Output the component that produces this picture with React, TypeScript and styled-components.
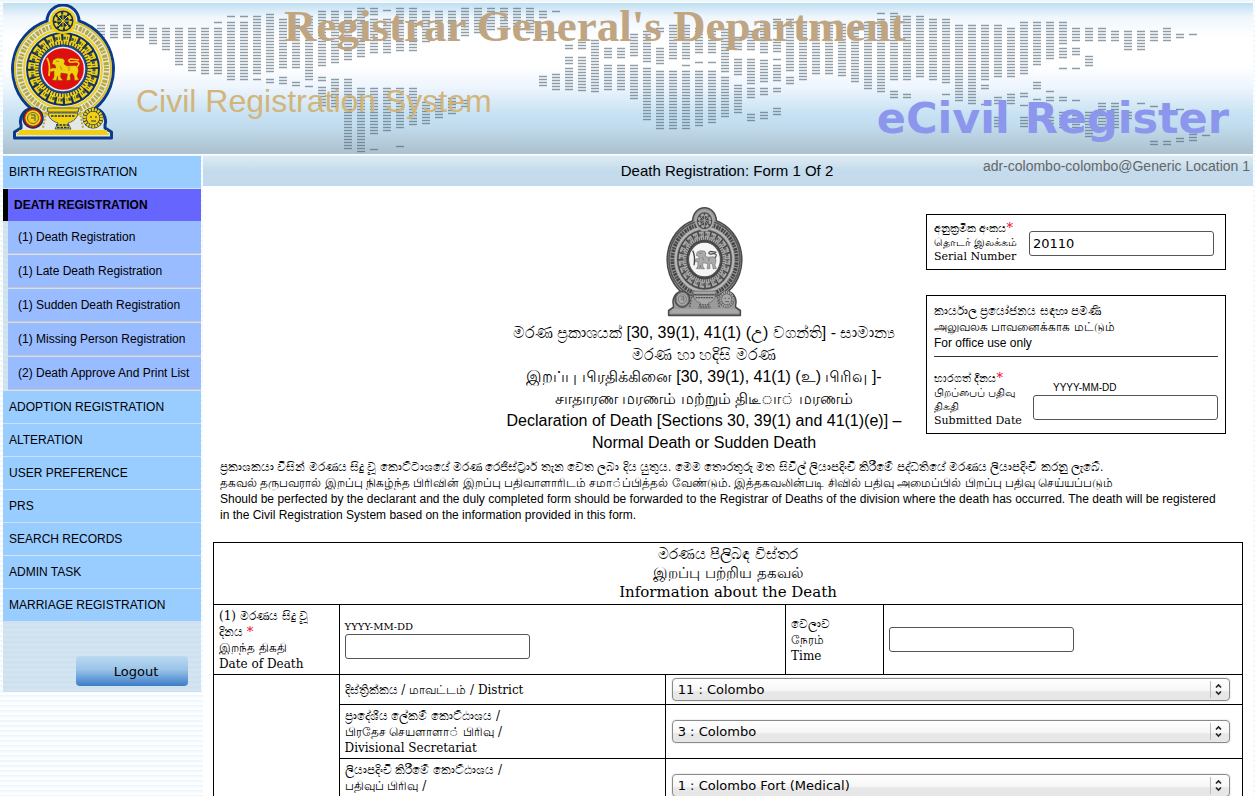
import React from 'react';
import styled, { createGlobalStyle, css } from 'styled-components';

const sans = "'Liberation Sans', 'Noto Sans', sans-serif";
const serif = "'DejaVu Serif', 'Noto Sans', serif";
const ui = "'DejaVu Sans', 'Noto Sans', sans-serif";

const Global = createGlobalStyle`
  * { box-sizing: border-box; }
  body {
    margin: 0;
    font-family: ${sans};
    font-size: 12px;
    color: #000;
    background: repeating-linear-gradient(#e9f4fa 0, #f5fafd 2px, #fdfeff 3px, #fdfeff 5px);
  }
`;

const Page = styled.div`
  padding: 3px 2px 0 3px;
  height: 100vh;
  overflow: hidden auto;
  scrollbar-width: none;
`;

/* ---------- banner ---------- */

const Banner = styled.header`
  position: relative;
  height: 151px;
  background: linear-gradient(#bfdff1, #eff6fc 14px, #fff 34px, #fff 62px, #eef5fd 84px, #c6e1f3 112px, #c2ddee 122px, #adc1cf 150px);
`;

const Dots = styled.svg`
  position: absolute;
  top: 0;
  left: 0;
`;

const BannerBody = styled.div`
  position: relative;
  display: grid;
  grid-template-columns: 104px 1fr auto;
  grid-template-rows: 64px 76px;
  column-gap: 21px;
  padding: 0 24px 0 8px;
`;

const CrestCell = styled.div`
  grid-row: 1 / 3;
  padding-top: 1px;
`;

const Department = styled.h1`
  grid-column: 2 / 4;
  margin: 0;
  padding-left: 148px;
  font: bold 45px/46px 'Liberation Serif', serif;
  color: #c0a582;
  white-space: nowrap;
`;

const System = styled.p`
  margin: 0;
  padding-top: 14px;
  font: 32px/40px ${sans};
  color: #d2b57a;
  white-space: nowrap;
`;

const Product = styled.p`
  margin: 0;
  padding-top: 28px;
  font: bold 43px/46px ${ui};
  color: #8b96ec;
  white-space: nowrap;
`;

/* ---------- frame ---------- */

const Columns = styled.div`
  display: grid;
  grid-template-columns: 198px 1fr;
  gap: 2px;
  margin-top: 2px;
`;

const Sidebar = styled.aside`
  align-self: start;
  min-height: 536px;
  background: repeating-linear-gradient(#cde1ef 0 2px, #d4e4f1 3px 5px);
`;

const Menu = styled.ul`
  margin: 0;
  padding: 0;
  list-style: none;
`;

const MenuLink = styled.a<{ $active?: boolean }>`
  display: block;
  height: 32px;
  margin-bottom: 1px;
  padding-left: 6px;
  line-height: 32px;
  color: #000;
  text-decoration: none;
  background: #99ccff;
  ${(p) =>
    p.$active &&
    css`
      margin-bottom: 0;
      border-left: 5px solid #000;
      background: #6666ff;
      font-weight: bold;
    `}
`;

const SubMenu = styled.ul`
  margin: 0 0 0 5px;
  padding: 0;
  list-style: none;
`;

const SubLink = styled.a`
  display: block;
  height: 33px;
  margin-bottom: 1px;
  padding-left: 10px;
  border-bottom: 1px solid #cfc4c8;
  line-height: 33px;
  color: #000;
  text-decoration: none;
  background: #99bbff;
  white-space: nowrap;
`;

const LogoutRow = styled.div`
  display: flex;
  justify-content: flex-end;
  padding: 34px 13px 0;
`;

const Logout = styled.button`
  width: 112px;
  height: 30px;
  padding: 0 0 0 8px;
  border: 0;
  border-radius: 4px;
  font: 13px ${ui};
  color: #000;
  background: linear-gradient(#bbdaf0, #9ac4e8 45%, #3c7dc8);
`;

const Main = styled.main`
  min-width: 0;
  background: #fff;
`;

const TitleBar = styled.div`
  display: grid;
  grid-template-columns: 1fr auto 1fr;
  height: 30px;
  padding: 0 3px 0 1px;
  background: linear-gradient(#deebf3, #c3dbed 50%, #c3dbed);
`;

const FormTitle = styled.h2`
  grid-column: 2;
  margin: 0;
  font: 15px/30px ${sans};
`;

const UserInfo = styled.span`
  justify-self: end;
  font: 14px/21px ${sans};
  color: #666;
`;

/* ---------- form head ---------- */

const FormHead = styled.div`
  display: grid;
  grid-template-columns: 1fr 400px 300px;
  gap: 22px;
  padding: 21px 27px 0 10px;
`;

const Declaration = styled.div`
  grid-column: 2;
  text-align: center;
  font: 16px/22px ${sans};
  white-space: nowrap;
`;

const CrestBox = styled.div`
  height: 115px;
`;

const Side = styled.div`
  display: flex;
  flex-direction: column;
  gap: 25px;
  padding-top: 7px;
`;

const SideBox = styled.section`
  border: 1px solid #000;
  padding: 7px 7px 5px;
`;

const FieldRow = styled.div<{ $low?: boolean }>`
  display: grid;
  grid-template-columns: 1fr 185px;
  align-items: center;
  padding-top: ${(p) => (p.$low ? 15 : 0)}px;
  padding-right: ${(p) => (p.$low ? 0 : 4)}px;
`;

const SmallLabel = styled.label`
  font: 11px/14px ${serif};
  white-space: nowrap;
`;

const Star = styled.span`
  color: #f00020;
  font-size: 13px;
  line-height: 1px;
`;

const Office = styled.p`
  margin: 0;
  padding-bottom: 5px;
  border-bottom: 1px solid #333;
  line-height: 16px;
`;

const DateField = styled.div`
  display: flex;
  flex-direction: column;
`;

const Hint = styled.span<{ $serif?: boolean; $pad?: boolean }>`
  padding-left: ${(p) => (p.$pad ? 20 : 0)}px;
  font: 10px/14px ${(p) => (p.$serif ? serif : sans)};
`;

const TextBox = styled.input`
  width: 185px;
  height: 25px;
  padding: 0 3px;
  border: 1px solid #555;
  border-radius: 3px;
  font: 13px ${ui};
  color: #000;
  background: #fff;
`;

const Notes = styled.div`
  padding: 5px 28px 0 17px;
  line-height: 16px;
  p { margin: 0; }
`;

/* ---------- details table ---------- */

const TableWrap = styled.div`
  padding: 19px 10px 0;
`;

const Details = styled.table`
  width: 100%;
  border-collapse: collapse;
  table-layout: fixed;
  font: 12px/16px ${serif};
  th, td {
    border: 1px solid #000;
    padding: 2px 5px;
    font-weight: normal;
    text-align: left;
  }
`;

const Heading = styled.th`
  && {
    height: 62px;
    font-size: 15px;
    line-height: 19px;
    text-align: center;
  }
`;

const Row = styled.tr<{ $h: number }>`
  height: ${(p) => p.$h}px;
`;

const SelectWrap = styled.div`
  position: relative;
  margin: 0 7px 0 1px;
  svg {
    position: absolute;
    right: 0;
    top: 0;
    pointer-events: none;
  }
`;

const Select = styled.select`
  display: block;
  width: 100%;
  height: 23px;
  padding: 0 5px;
  border: 1px solid #8a8a8a;
  border-radius: 4px;
  appearance: none;
  font: 13px ${ui};
  color: #000;
  background: linear-gradient(#fff, #f6f6f6 55%, #e8e8e8 60%, #e6e6e6);
  box-shadow: 0 0 2px #ccc;
`;

/* Each entry is a column centre followed by top/bottom pairs of its dash runs. */
const MAP: [number, number[]][] = [
  [101, [26, 38]], [114, [26, 38]], [127, [26, 38]], [140, [26, 38]], [153, [29, 44]], [166, [29, 50]],
  [179, [29, 66]], [192, [29, 72]], [205, [29, 75]], [218, [23, 23, 29, 75]], [231, [17, 17, 23, 81]],
  [244, [17, 17, 23, 81]], [257, [17, 74, 80, 80]], [270, [15, 72, 80, 84]], [283, [20, 69, 78, 84]],
  [296, [20, 70, 83, 88]], [309, [17, 80, 87, 87]], [322, [12, 66, 78, 81, 88, 106]], [335, [12, 63, 80, 107]],
  [348, [12, 61, 80, 149]], [361, [9, 58, 89, 152]], [374, [9, 15, 20, 54, 89, 135, 150, 150]],
  [387, [11, 11, 20, 54, 89, 132]], [400, [9, 52, 89, 130, 147, 147]], [413, [9, 52, 89, 127]],
  [426, [12, 43, 103, 124]], [439, [12, 41, 100, 118]], [452, [12, 40, 99, 115]], [465, [9, 37, 101, 107]],
  [478, [9, 33]], [491, [9, 30]], [504, [9, 30]], [517, [9, 30]], [530, [9, 33]],
  [543, [12, 20, 32, 35, 77, 87]], [556, [12, 12, 33, 33, 75, 90]], [569, [46, 50, 58, 64, 69, 92]],
  [582, [43, 50, 58, 92]], [595, [41, 92]], [608, [49, 58, 66, 92]], [621, [49, 58, 66, 92]],
  [634, [35, 58, 66, 101]], [647, [32, 64, 69, 122]], [660, [29, 34, 49, 64, 72, 130]],
  [673, [26, 61, 72, 130]], [686, [26, 61, 66, 66, 72, 130]], [699, [29, 55, 63, 63, 72, 127]],
  [712, [32, 55, 63, 63, 72, 125]], [725, [30, 73, 78, 119]], [738, [38, 52, 60, 75, 86, 113]],
  [751, [32, 52, 60, 84, 89, 98, 115, 121]], [764, [23, 55, 61, 84, 89, 95, 113, 121]],
  [777, [20, 29, 40, 52, 60, 60, 66, 82, 89, 93, 109, 116]], [790, [20, 73, 78, 84]], [803, [23, 80]],
  [816, [26, 75]], [829, [23, 75]], [842, [25, 78]], [855, [28, 83]], [868, [23, 89]], [881, [14, 14, 20, 92]],
  [894, [14, 80, 92, 98]], [907, [17, 81, 95, 98]], [920, [17, 78]], [933, [20, 81]],
  [946, [20, 84, 95, 95]], [959, [26, 101]], [972, [26, 104]], [985, [26, 81, 86, 89, 105, 105]],
  [998, [26, 78, 98, 104, 118, 127]], [1011, [29, 78, 95, 105]], [1024, [23, 75, 94, 97, 106, 106, 118, 127]],
  [1037, [23, 67, 83, 90, 100, 100]], [1050, [23, 61, 92, 92, 98, 101, 118, 124]],
  [1063, [23, 44, 49, 58, 69, 69, 98, 101, 113, 128]], [1076, [29, 41, 49, 55, 69, 69, 101, 101, 113, 128]],
  [1089, [29, 41, 57, 66, 113, 138]], [1102, [29, 41, 104, 130]], [1115, [32, 41, 104, 130]],
  [1128, [32, 50, 113, 119]], [1141, [32, 50, 104, 104]], [1154, [32, 41, 107, 107, 142, 145]],
  [1167, [29, 41, 142, 145]], [1180, [35, 38, 110, 110, 139, 142]], [1193, [35, 35, 135, 141]], [1206, [136, 138]],
];

const dashPath = MAP.map(([x, spans]) => {
  let d = '';
  for (let i = 0; i < spans.length; i += 2) {
    for (let y = spans[i]; y <= spans[i + 1]; y += 3) d += `M${x - 4} ${y - 0.5}h8`;
  }
  return d;
}).join('');

function WorldDots() {
  return (
    <Dots width="1250" height="151" viewBox="3 3 1250 151" aria-hidden="true">
      <path d={dashPath} stroke="#7c98a8" strokeOpacity="0.22" strokeWidth="3" />
      <path d={dashPath} stroke="#46525c" strokeOpacity="0.5" strokeWidth="1" />
    </Dots>
  );
}

const OUTLINE =
  'M36 17 A16 16 0 0 1 68 17 A51 51 0 0 1 84 104.500 A13 13 0 0 1 94 121 L94 124 L100.500 128 L100.500 134 L3.500 134 L3.500 128 L10 124 L10 121 A13 13 0 0 1 20 104.500 A51 51 0 0 1 36 17Z';

const LION =
  'M-10 -9 L-6 -11 L0 -10.500 L2 -8 L1 -5 L4 -3 L12 -3.500 C15 -3 16 0 15 4 L14 7 L16 11 L11.500 11.500 L11 7 L9 4 L7 6 L7.500 11 L3.500 11.500 L4.500 5 L-2 4 L-2.500 8 L0 11.500 L-5 11.500 L-5.500 7 L-6.500 11.500 L-11 11 L-9 8 L-9 2 L-12 3 L-14 1 L-11 -1 L-7 -1 L-8 -4 L-11 -5 Z';

function Crest({ mono, width, height }: { mono?: boolean; width: number; height: number }) {
  const line = mono ? '#4a4a4a' : '#0b3a8c';
  const gold = mono ? '#a8a8a8' : '#f0d010';
  const pale = mono ? '#9a9a9a' : '#e3e8e6';
  const red = mono ? '#f4f4f4' : '#e00f0f';
  const dark = mono ? '#4a4a4a' : '#14305c';
  return (
    <svg width={width} height={height} viewBox="0 0 104 136" role="img" aria-label="Emblem of Sri Lanka" preserveAspectRatio="none">
      <path d={OUTLINE} fill={pale} stroke={line} strokeWidth={mono ? 2 : 3} strokeLinejoin="round" />
      <circle cx="52" cy="65" r="48" fill="none" stroke={mono ? '#555' : '#d9c030'} strokeWidth="2" />
      <circle cx="52" cy="65" r="43.500" fill="none" stroke={mono ? '#444' : '#b9a93c'} strokeWidth="5" strokeDasharray="2 1.5 3 1" />
      <circle cx="52" cy="65" r="39" fill="none" stroke={mono ? '#bbb' : gold} strokeWidth="2" />
      <circle cx="52" cy="65" r="37" fill={dark} />
      <circle cx="52" cy="65" r="31.500" fill="none" stroke={gold} strokeWidth="7" strokeDasharray="6.200 2.050" />
      <circle cx="52" cy="65" r="31" fill="none" stroke={dark} strokeWidth="3" strokeDasharray="2.500 1.200 0.800 3.620" strokeOpacity="0.8" />
      <circle cx="52" cy="65" r="26.500" fill="none" stroke={gold} strokeWidth="4" strokeDasharray="2 0.900" />
      <circle cx="52" cy="65" r="24" fill={mono ? '#444' : '#1c4a94'} />
      <circle cx="52" cy="65" r="21.500" fill={red} stroke={mono ? '#555' : '#e6edf5'} strokeWidth="1.500" />
      <g transform="translate(52 65)" fill={mono ? '#aaa' : gold} stroke={mono ? '#333' : '#7a4a00'} strokeWidth="0.5">
        <path d={LION} />
        <path d="M14 -2 C18 -6 15 -8 10 -7 C6 -6 4 -9 8 -10 L16 -9" fill="none" stroke={mono ? '#444' : gold} strokeWidth="1.500" />
        <path d="M-16 -11 C-13 -6 -13 0 -14 7" fill="none" stroke={mono ? '#444' : gold} strokeWidth="1.800" />
        <path d="M-7 -8 L-4 -7.500 M-3 -3 L-1 1 M6 -2 L6 2" fill="none" />
      </g>
      <circle cx="52" cy="17" r="13" fill={gold} />
      <circle cx="52" cy="17" r="10.500" fill={dark} />
      <g stroke={gold} fill="none">
        <circle cx="52" cy="17" r="7.500" strokeWidth="3" strokeDasharray="3.900 1.990" />
        <path d="M52 10V24M45 17H59M47 12L57 22M57 12L47 22" strokeWidth="1" />
      </g>
      <path d="M36 104H68L67 108H37ZM37 109H67C66 116 60 118 57 119L60 125H44L47 119C44 118 38 116 37 109Z" fill={gold} stroke={dark} strokeWidth="0.700" />
      <path d="M40 112H64M45 121H59M46 123.500H58" stroke={dark} strokeWidth="1.400" strokeDasharray="2.500 1" />
      <path d="M35 108L32 124M69 108L72 124" stroke={mono ? '#555' : '#b9a93c'} strokeWidth="2" strokeDasharray="2 1.500" />
      <circle cx="22" cy="114" r="9.500" fill={gold} stroke={dark} strokeWidth="2.500" />
      <circle cx="22" cy="114" r="8.500" fill="none" stroke={mono ? '#777' : '#c01818'} strokeWidth="1.500" />
      <circle cx="22" cy="114" r="5.500" fill="none" stroke={dark} strokeWidth="0.600" />
      <path d="M20 111h4v6M20 114h3" fill="none" stroke={dark} strokeWidth="0.800" />
      <circle cx="82" cy="114" r="10.500" fill={dark} />
      <circle cx="82" cy="114" r="8.500" fill="none" stroke={gold} strokeWidth="3" strokeDasharray="2.200 0.760" />
      <circle cx="82" cy="114" r="6.500" fill={gold} />
      <path d="M79 113h2M84 113h2M80 117h5" stroke={dark} strokeWidth="1" />
      <path d="M8 126H96V129H98V131H6V129H8Z" fill={gold} />
    </svg>
  );
}

const subItems = [
  '(1) Death Registration',
  '(1) Late Death Registration',
  '(1) Sudden Death Registration',
  '(1) Missing Person Registration',
  '(2) Death Approve And Print List',
];

const items = [
  'ADOPTION REGISTRATION',
  'ALTERATION',
  'USER PREFERENCE',
  'PRS',
  'SEARCH RECORDS',
  'ADMIN TASK',
  'MARRIAGE REGISTRATION',
];

function DropDown({ id, value }: { id: string; value: string }) {
  return (
    <SelectWrap>
      <Select id={id} defaultValue={value}>
        <option>{value}</option>
      </Select>
      <svg width="20" height="23" viewBox="0 0 20 23" aria-hidden="true">
        <path d="M.5 3V20" stroke="#bbb" />
        <path d="M6 9.500L8.500 7L11 9.500M6 13.500L8.500 16L11 13.500" fill="none" stroke="#222" strokeWidth="1.600" />
      </svg>
    </SelectWrap>
  );
}

export default function App() {
  return (
    <Page>
      <Global />
      <Banner>
        <WorldDots />
        <BannerBody>
          <CrestCell>
            <Crest width={104} height={136} />
          </CrestCell>
          <Department>Registrar General's Department</Department>
          <System>Civil Registration System</System>
          <Product>eCivil Register</Product>
        </BannerBody>
      </Banner>
      <Columns>
        <Sidebar>
          <Menu>
            <li><MenuLink href="#birth">BIRTH REGISTRATION</MenuLink></li>
            <li>
              <MenuLink href="#death" $active>DEATH REGISTRATION</MenuLink>
              <SubMenu>
                {subItems.map((t) => (
                  <li key={t}><SubLink href="#form">{t}</SubLink></li>
                ))}
              </SubMenu>
            </li>
            {items.map((t) => (
              <li key={t}><MenuLink href="#section">{t}</MenuLink></li>
            ))}
          </Menu>
          <LogoutRow>
            <Logout type="button">Logout</Logout>
          </LogoutRow>
        </Sidebar>
        <Main>
          <TitleBar>
            <FormTitle>Death Registration: Form 1 Of 2</FormTitle>
            <UserInfo>adr-colombo-colombo@Generic Location 1</UserInfo>
          </TitleBar>
          <FormHead>
            <Declaration>
              <CrestBox>
                <Crest mono width={77} height={110} />
              </CrestBox>
              මරණ ප්‍රකාශයක් [30, 39(1), 41(1) (උ) වගන්ති] - සාමාන්‍ය<br />
              මරණ හා හදිසි මරණ<br />
              இறப்பு பிரதிக்கினை [30, 39(1), 41(1) (உ) பிரிவு ]-<br />
              சாதாரண மரணம் மற்றும் திடீ◌ா◌் மரணம்<br />
              Declaration of Death [Sections 30, 39(1) and 41(1)(e)] –<br />
              Normal Death or Sudden Death
            </Declaration>
            <Side>
              <SideBox>
                <FieldRow>
                  <SmallLabel htmlFor="serial">
                    අනුක්‍රමික අංකය<Star>*</Star><br />
                    தொடர் இலக்கம்<br />
                    Serial Number
                  </SmallLabel>
                  <TextBox id="serial" defaultValue="20110" />
                </FieldRow>
              </SideBox>
              <SideBox>
                <Office>
                  කාර්යාල ප්‍රයෝජනය සඳහා පමණි<br />
                  அலுவலக பாவனைக்காக மட்டும்<br />
                  For office use only
                </Office>
                <FieldRow $low>
                  <SmallLabel htmlFor="submitted">
                    භාරගත් දිනය<Star>*</Star><br />
                    பிறப்பைப் பதிவு<br />
                    திகதி<br />
                    Submitted Date
                  </SmallLabel>
                  <DateField>
                    <Hint $pad>YYYY-MM-DD</Hint>
                    <TextBox id="submitted" />
                  </DateField>
                </FieldRow>
              </SideBox>
            </Side>
          </FormHead>
          <Notes>
            <p>ප්‍රකාශකයා විසින් මරණය සිදු වූ කොට්ටාශයේ මරණ රෙජිස්ට්‍රාර් තැන වෙත ලබා දිය යුතුය. මෙම තොරතුරු මත සිවිල් ලියාපදිංචි කිරීමේ පද්ධතියේ මරණය ලියාපදිංචි කරනු ලැබේ.</p>
            <p>தகவல் தருபவரால் இறப்பு நிகழ்ந்த பிரிவின் இறப்பு பதிவாளாரிடம் சமா◌்ப்பித்தல் வேண்டும். இத்தகவலின்படி சிவில் பதிவு அமைப்பில் பிறப்பு பதிவு செய்யப்படும்</p>
            <p>Should be perfected by the declarant and the duly completed form should be forwarded to the Registrar of Deaths of the division where the death has occurred. The death will be registered in the Civil Registration System based on the information provided in this form.</p>
          </Notes>
          <TableWrap>
            <Details>
              <colgroup>
                <col style={{ width: '12.2%' }} />
                <col style={{ width: '31.7%' }} />
                <col style={{ width: '11.7%' }} />
                <col style={{ width: '9.5%' }} />
                <col />
              </colgroup>
              <tbody>
                <tr>
                  <Heading colSpan={5}>
                    මරණය පිලිබඳ විස්තර<br />
                    இறப்பு பற்றிய தகவல்<br />
                    Information about the Death
                  </Heading>
                </tr>
                <Row $h={70}>
                  <td>
                    <label htmlFor="date">
                      (1) මරණය සිදු වූ දිනය <Star>*</Star><br />
                      இறந்த திகதி<br />
                      Date of Death
                    </label>
                  </td>
                  <td colSpan={2}>
                    <DateField>
                      <Hint $serif>YYYY-MM-DD</Hint>
                      <TextBox id="date" />
                    </DateField>
                  </td>
                  <td>
                    <label htmlFor="time">
                      වෙලාව<br />
                      நேரம்<br />
                      Time
                    </label>
                  </td>
                  <td><TextBox id="time" /></td>
                </Row>
                <Row $h={30}>
                  <td rowSpan={4} />
                  <td><label htmlFor="district">දිස්ත්‍රික්කය / மாவட்டம் / District</label></td>
                  <td colSpan={3}><DropDown id="district" value="11 : Colombo" /></td>
                </Row>
                <Row $h={54}>
                  <td>
                    <label htmlFor="division">
                      ප්‍රාදේශීය ලේකම් කොට්ඨාශය /<br />
                      பிரதேச செயளாளா◌் பிரிவு /<br />
                      Divisional Secretariat
                    </label>
                  </td>
                  <td colSpan={3}><DropDown id="division" value="3 : Colombo" /></td>
                </Row>
                <Row $h={54}>
                  <td>
                    <label htmlFor="regdiv">
                      ලියාපදිංචි කිරීමේ කොට්ඨාශය /<br />
                      பதிவுப் பிரிவு /<br />
                      Registration Division
                    </label>
                  </td>
                  <td colSpan={3}><DropDown id="regdiv" value="1 : Colombo Fort (Medical)" /></td>
                </Row>
              </tbody>
            </Details>
          </TableWrap>
        </Main>
      </Columns>
    </Page>
  );
}
